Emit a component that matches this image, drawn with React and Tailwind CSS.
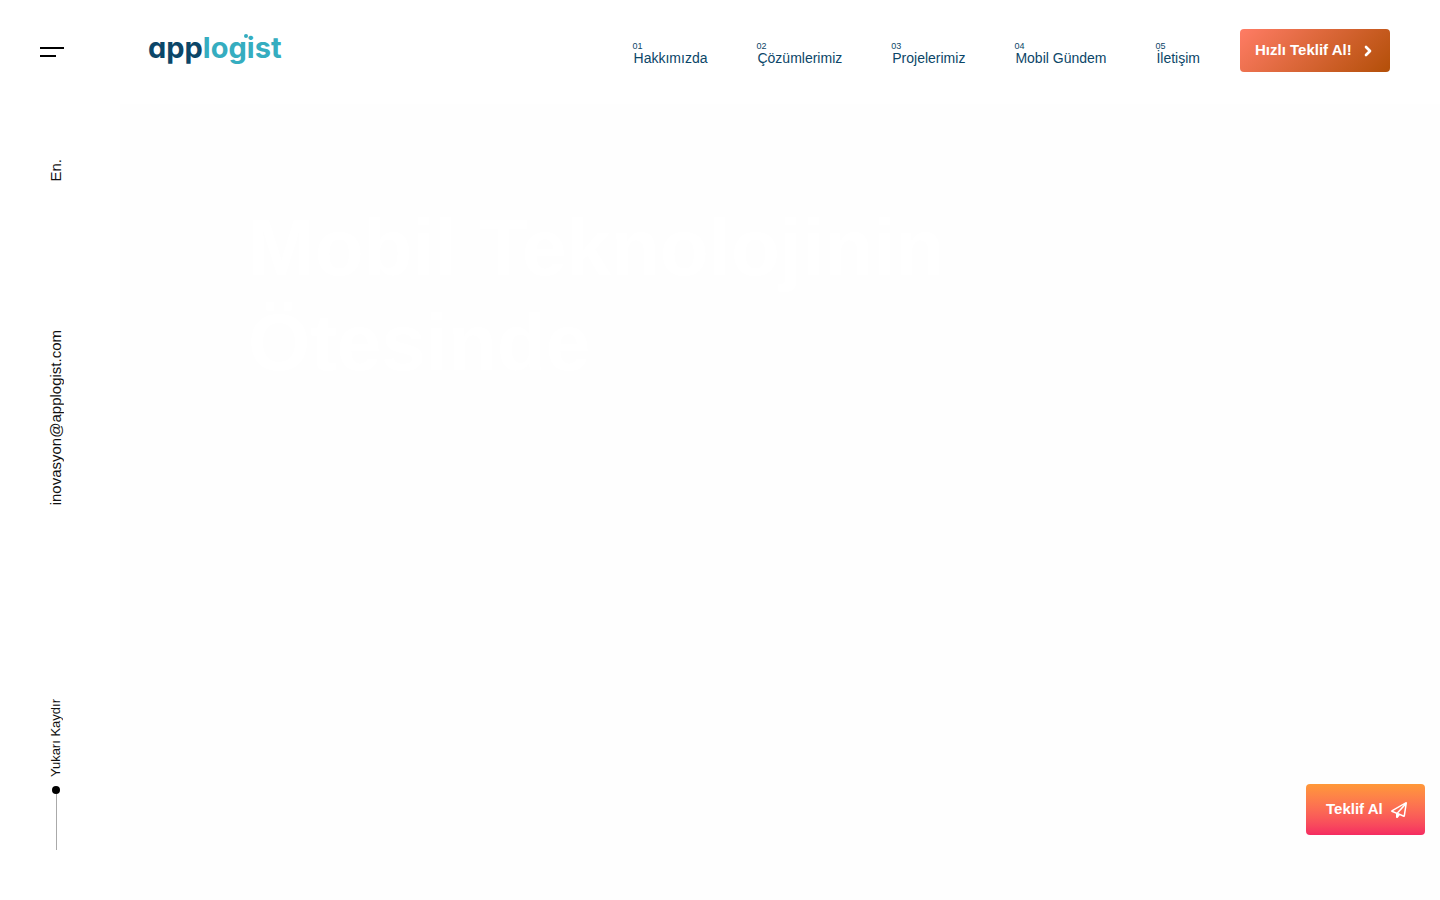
import { ChevronRight } from "lucide-react";
import { FaRegPaperPlane } from "react-icons/fa6";

const links = [
  ["01", "Hakkımızda"],
  ["02", "Çözümlerimiz"],
  ["03", "Projelerimiz"],
  ["04", "Mobil Gündem"],
  ["05", "İletişim"],
];

function SideRail() {
  return (
    <aside className="flex w-[120px] shrink-0 flex-col items-start pt-[47px] pb-[50px] pl-10 text-[#111]">
      <button type="button" aria-label="Menü" className="flex flex-col gap-1.5">
        <span className="h-0.5 w-6 bg-black" />
        <span className="h-0.5 w-4 bg-black" />
      </button>
      <div className="flex w-8 grow flex-col items-center">
        <a href="#en" className="mt-[102px] rotate-180 text-[15px] leading-[18px] [writing-mode:vertical-rl]">
          En.
        </a>
        <a
          href="mailto:inovasyon@applogist.com"
          className="mt-[148px] rotate-180 text-[15px] leading-[18px] [writing-mode:vertical-rl]"
        >
          inovasyon@applogist.com
        </a>
        <a href="#top" className="mt-auto flex flex-col items-center">
          <span className="rotate-180 text-[13px] leading-[18px] [writing-mode:vertical-rl]">Yukarı Kaydır</span>
          <span className="mt-[9px] size-2 rounded-full bg-black" />
          <span className="h-14 w-px bg-[#aaa]" />
        </a>
      </div>
    </aside>
  );
}

function Header() {
  return (
    <header className="flex items-start pr-[50px] pl-7">
      <a
        href="#top"
        className="mt-7 font-['Inter',sans-serif] text-[29px] leading-10 font-bold text-[#0b4668] [font-feature-settings:'cv11']"
      >
        app
        <span className="text-[#35adc0]">
          lo
          <span className="relative">
            g<span className="absolute top-1 -right-px size-1 rounded-full bg-[#35adc0]" />
          </span>
          ist
        </span>
      </a>
      <nav className="mt-[41px] ml-auto flex gap-[49px] text-[#0b4668]">
        {links.map(([number, label]) => (
          <a key={number} href={"#" + number} className="flex flex-col">
            <span className="text-[9px] leading-[10px]">{number}</span>
            <span className="pl-px text-[14px] leading-[14px]">{label}</span>
          </a>
        ))}
      </nav>
      <button
        type="button"
        className="mt-[29px] ml-10 flex h-[43px] w-[150px] items-center gap-2 rounded bg-[linear-gradient(135deg,#ff7c65,#b34f08)] pl-[15px] text-[15px] font-bold text-white"
      >
        Hızlı Teklif Al!
        <ChevronRight className="size-4" strokeWidth={4} />
      </button>
    </header>
  );
}

export default function App() {
  return (
    <div id="top" className="flex min-h-screen bg-white font-['Liberation_Sans',Arial,sans-serif]">
      <SideRail />
      <div className="flex min-w-0 grow flex-col">
        <Header />
        <main className="mt-8 grow bg-[#fefefe] pt-24 pl-32">
          <h1 className="text-[80px] leading-[95px] font-bold text-white">
            Mobil Teknolojinin
            <br />
            Ötesinde
          </h1>
        </main>
      </div>
      <button
        type="button"
        className="fixed right-[15px] bottom-[65px] flex h-[51px] w-[119px] items-center gap-2 rounded bg-linear-to-b from-[#ff9838] to-[#f52a61] pl-5 text-[15px] font-bold text-white"
      >
        Teklif Al
        <FaRegPaperPlane className="size-4" />
      </button>
    </div>
  );
}
